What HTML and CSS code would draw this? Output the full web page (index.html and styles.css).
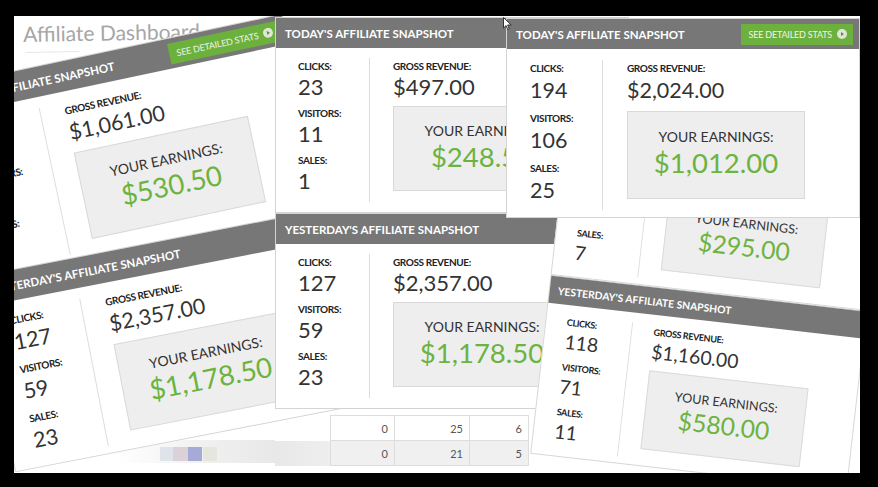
FILE: index.html
```html
<!DOCTYPE html>
<html lang="en">
<head>
<meta charset="utf-8" />
<title>Affiliate Dashboard</title>
<link rel="stylesheet" href="styles.css">
</head>
<body>
<div class="stage">

	<!-- page behind everything: title and faded chart row -->
	<div class="back_page">
		<h1>Affiliate Dashboard</h1>
		<div class="title_rule"></div>
	</div>
	<div class="chart_fade"><i class="c1"></i><i class="c2"></i><i class="c3"></i><i class="c4"></i></div>

	<!-- tilted shots, left -->
	<div class="card tilt_a">
		<div class="card_head">
			<span>TODAY'S AFFILIATE SNAPSHOT</span>
			<span class="stats_btn">SEE DETAILED STATS <svg width="10" height="10" viewBox="0 0 10 10"><circle cx="5" cy="5" r="5" fill="#dfe6d8"/><path d="M4 3l3 2-3 2z" fill="#5d8f37"/></svg></span>
		</div>
		<div class="card_body">
			<div class="counts">
				<div class="stat"><span class="lbl">CLICKS:</span><span class="num">98</span></div>
				<div class="stat"><span class="lbl">VISITORS:</span><span class="num">41</span></div>
				<div class="stat"><span class="lbl">SALES:</span><span class="num">9</span></div>
			</div>
			<div class="money">
				<div class="stat"><span class="lbl">GROSS REVENUE:</span><span class="num">$1,061.00</span></div>
				<div class="earn"><p>YOUR EARNINGS:</p><strong>$530.50</strong></div>
			</div>
		</div>
	</div>

	<div class="card tilt_b">
		<div class="card_head"><span>YESTERDAY'S AFFILIATE SNAPSHOT</span></div>
		<div class="card_body">
			<div class="counts">
				<div class="stat"><span class="lbl">CLICKS:</span><span class="num">127</span></div>
				<div class="stat"><span class="lbl">VISITORS:</span><span class="num">59</span></div>
				<div class="stat"><span class="lbl">SALES:</span><span class="num">23</span></div>
			</div>
			<div class="money">
				<div class="stat"><span class="lbl">GROSS REVENUE:</span><span class="num">$2,357.00</span></div>
				<div class="earn"><p>YOUR EARNINGS:</p><strong>$1,178.50</strong></div>
			</div>
		</div>
	</div>

	<!-- flat shot, middle -->
	<div class="mid_page">
		<div class="card mid">
			<div class="card_head"><span>TODAY'S AFFILIATE SNAPSHOT</span></div>
			<div class="card_body">
				<div class="counts">
					<div class="stat"><span class="lbl">CLICKS:</span><span class="num">23</span></div>
					<div class="stat"><span class="lbl">VISITORS:</span><span class="num">11</span></div>
					<div class="stat"><span class="lbl">SALES:</span><span class="num">1</span></div>
				</div>
				<div class="money">
					<div class="stat"><span class="lbl">GROSS REVENUE:</span><span class="num">$497.00</span></div>
					<div class="earn"><p>YOUR EARNINGS:</p><strong>$248.50</strong></div>
				</div>
			</div>
		</div>
		<div class="card mid">
			<div class="card_head"><span>YESTERDAY'S AFFILIATE SNAPSHOT</span></div>
			<div class="card_body">
				<div class="counts">
					<div class="stat"><span class="lbl">CLICKS:</span><span class="num">127</span></div>
					<div class="stat"><span class="lbl">VISITORS:</span><span class="num">59</span></div>
					<div class="stat"><span class="lbl">SALES:</span><span class="num">23</span></div>
				</div>
				<div class="money">
					<div class="stat"><span class="lbl">GROSS REVENUE:</span><span class="num">$2,357.00</span></div>
					<div class="earn"><p>YOUR EARNINGS:</p><strong>$1,178.50</strong></div>
				</div>
			</div>
		</div>
		<table class="stats_table">
			<tr><td class="lead"></td><td>0</td><td>25</td><td>6</td></tr>
			<tr class="alt"><td class="lead"></td><td>0</td><td>21</td><td>5</td></tr>
		</table>
	</div>

	<!-- tilted shot, right -->
	<div class="right_page">
		<div class="card">
			<div class="card_head"><span>TODAY'S AFFILIATE SNAPSHOT</span></div>
			<div class="card_body">
				<div class="counts">
					<div class="stat"><span class="lbl">CLICKS:</span><span class="num">96</span></div>
					<div class="stat"><span class="lbl">VISITORS:</span><span class="num">38</span></div>
					<div class="stat"><span class="lbl">SALES:</span><span class="num">7</span></div>
				</div>
				<div class="money">
					<div class="stat"><span class="lbl">GROSS REVENUE:</span><span class="num">$590.00</span></div>
					<div class="earn"><p>YOUR EARNINGS:</p><strong>$295.00</strong></div>
				</div>
			</div>
		</div>
		<div class="card">
			<div class="card_head"><span>YESTERDAY'S AFFILIATE SNAPSHOT</span></div>
			<div class="card_body">
				<div class="counts">
					<div class="stat"><span class="lbl">CLICKS:</span><span class="num">118</span></div>
					<div class="stat"><span class="lbl">VISITORS:</span><span class="num">71</span></div>
					<div class="stat"><span class="lbl">SALES:</span><span class="num">11</span></div>
				</div>
				<div class="money">
					<div class="stat"><span class="lbl">GROSS REVENUE:</span><span class="num">$1,160.00</span></div>
					<div class="earn"><p>YOUR EARNINGS:</p><strong>$580.00</strong></div>
				</div>
			</div>
		</div>
	</div>

	<!-- front shot, top right -->
	<div class="card front">
		<div class="card_head">
			<span>TODAY'S AFFILIATE SNAPSHOT</span>
			<span class="stats_btn">SEE DETAILED STATS <svg width="10" height="10" viewBox="0 0 10 10"><circle cx="5" cy="5" r="5" fill="#dfe6d8"/><path d="M4 3l3 2-3 2z" fill="#5d8f37"/></svg></span>
		</div>
		<div class="card_body">
			<div class="counts">
				<div class="stat"><span class="lbl">CLICKS:</span><span class="num">194</span></div>
				<div class="stat"><span class="lbl">VISITORS:</span><span class="num">106</span></div>
				<div class="stat"><span class="lbl">SALES:</span><span class="num">25</span></div>
			</div>
			<div class="money">
				<div class="stat"><span class="lbl">GROSS REVENUE:</span><span class="num">$2,024.00</span></div>
				<div class="earn"><p>YOUR EARNINGS:</p><strong>$1,012.00</strong></div>
			</div>
		</div>
	</div>
	<svg class="cursor" width="9" height="13" viewBox="0 0 9 13"><path d="M.5.5v10.5l2.6-2.4 1.7 3.9 1.5-.7-1.7-3.8h3.6z" fill="#fff" stroke="#333" stroke-width="1"/></svg>
</div>
</body>
</html>
```

FILE: styles.css
```css
body{margin:0;background:#000;font-family:Lato,"Open Sans",Arial,sans-serif;}
.stage{position:relative;width:846px;height:457px;margin:16px 0 0 14px;background:#fff;overflow:hidden;}

/* back page */
.back_page{position:absolute;left:9px;top:6px;transform:rotate(-1deg);transform-origin:0 0;}
.back_page h1{margin:0;font-size:21px;line-height:24px;font-weight:400;color:#a6a6a6;white-space:nowrap;}
.title_rule{width:54px;height:1px;background:#e6e6e6;margin:6px 0 0 2px;}
.chart_fade{position:absolute;left:101px;top:424px;width:160px;height:23px;box-sizing:border-box;padding:7px 0 0 45px;display:flex;align-items:flex-start;background:linear-gradient(90deg,#fff 0,#f3f3f3 45%,#e8e8e8 100%);}
.chart_fade i{display:block;height:14px;}
.c1{width:13px;background:#dfe3ea;}
.c2{width:15px;background:#ddd1d8;}
.c3{width:14px;background:#a5aad6;}
.c4{width:14px;background:#e5e6dd;margin-left:1px;}

/* snapshot card */
.card{width:354px;background:#fff;border:1px solid #d4d4d4;box-sizing:border-box;}
.card_head{height:30px;background:#777;color:#fff;display:flex;align-items:center;justify-content:space-between;padding:0 6px 0 9px;font-size:11.5px;font-weight:700;white-space:nowrap;}
.stats_btn{display:flex;align-items:center;gap:5px;height:21px;padding:0 6px 0 8px;background:#6cb13d;font-size:9px;font-weight:400;letter-spacing:-.2px;color:#eef5e8;}
.card_body{display:flex;height:168px;}
.counts{width:96px;box-sizing:border-box;margin:11px 0 7px;padding:1px 0 0 23px;border-right:1px solid #ddd;}
.money{padding:12px 0 0 24px;}
.stat .lbl{display:block;font-size:10px;line-height:14px;font-weight:700;letter-spacing:-.4px;color:#222;white-space:nowrap;}
.stat .num{display:block;font-size:21.5px;line-height:26px;font-weight:400;color:#333;margin:2px 0 8px;white-space:nowrap;}
.earn{width:178px;height:88px;box-sizing:border-box;margin-top:5px;padding-top:15px;background:#eee;border:1px solid #d9d9d9;text-align:center;}
.earn p{margin:0;font-size:14px;line-height:20px;color:#333;white-space:nowrap;}
.earn strong{display:block;font-size:27.5px;line-height:32px;font-weight:400;color:#6cb33f;white-space:nowrap;}

/* middle shot is a little tighter */
.mid .card_body{height:164px;}
.mid .counts{width:94px;margin:10px 0 10px;padding:1px 0 0 22px;}
.mid .money{padding:11px 0 0 23px;}
.mid .stat .num{font-size:22px;line-height:24px;margin:2px 0 7px;}
.mid .earn{height:85px;margin-top:6px;padding-top:14px;}

.stats_table{align-self:flex-start;margin-top:6px;border-collapse:collapse;font-size:11px;color:#555;}
.stats_table td{height:24px;padding:0 6px 0 0;text-align:right;border:1px solid #ddd;}
.stats_table td:nth-child(2){width:57px;}
.stats_table td:nth-child(3){width:68px;}
.stats_table td:nth-child(4){width:52px;}
.stats_table .lead{width:55px;border:0;padding:0;}
.stats_table .alt td{background:#f0f0f0;}
.stats_table .alt .lead{background:linear-gradient(90deg,#e8e8e8,#eeeeee);}

/* placement of each shot on the canvas */
.tilt_a{position:absolute;left:-78px;top:71px;transform:rotate(-12deg);transform-origin:0 0;}
.tilt_b{position:absolute;left:-37px;top:260px;transform:rotate(-11deg);transform-origin:0 0;}
.mid_page{position:absolute;left:261px;top:1px;display:flex;flex-direction:column;}
.right_page{position:absolute;left:557px;top:80px;transform:rotate(6.5deg) scale(.9);transform-origin:0 0;}
.front{position:absolute;left:492px;top:2px;}
.cursor{position:absolute;left:489px;top:1px;}
```
